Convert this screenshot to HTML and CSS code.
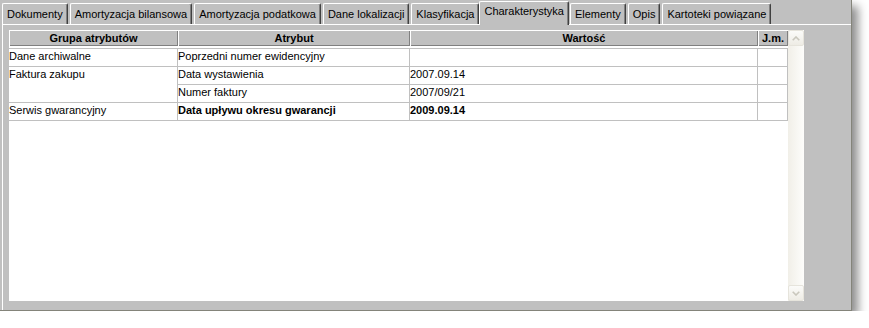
FILE: index.html
```html
<!DOCTYPE html>
<html lang="pl">
<head>
  <meta charset="UTF-8">
  <title>Charakterystyka</title>
  <link rel="stylesheet" href="styles.css">
</head>
<body>

  <div class="window">
    <div class="tabs">
      <div class="tab">Dokumenty</div>
      <div class="tab">Amortyzacja bilansowa</div>
      <div class="tab">Amortyzacja podatkowa</div>
      <div class="tab">Dane lokalizacji</div>
      <div class="tab">Klasyfikacja</div>
      <div class="tab active">Charakterystyka</div>
      <div class="tab">Elementy</div>
      <div class="tab">Opis</div>
      <div class="tab">Kartoteki powiązane</div>
    </div>

    <div class="panel">
      <div class="grid-wrap">
        <table class="grid">
          <thead>
            <tr>
              <th class="col-group">Grupa atrybutów</th>
              <th class="col-attr">Atrybut</th>
              <th class="col-value">Wartość</th>
              <th class="col-unit">J.m.</th>
            </tr>
          </thead>
          <tbody>
            <tr>
              <td>Dane archiwalne</td>
              <td>Poprzedni numer ewidencyjny</td>
              <td></td>
              <td></td>
            </tr>
            <tr>
              <td rowspan="2">Faktura zakupu</td>
              <td>Data wystawienia</td>
              <td>2007.09.14</td>
              <td></td>
            </tr>
            <tr>
              <td>Numer faktury</td>
              <td>2007/09/21</td>
              <td></td>
            </tr>
            <tr class="marked">
              <td class="plain">Serwis gwarancyjny</td>
              <td>Data upływu okresu gwarancji</td>
              <td>2009.09.14</td>
              <td></td>
            </tr>
          </tbody>
        </table>
      </div>

      <div class="scrollbar">
        <div class="scroll-btn">
          <svg width="8" height="5" viewBox="0 0 8 5"><path d="M0.7 4.3 L4 1 L7.3 4.3" fill="none" stroke="#c9c7bd" stroke-width="1.6"/></svg>
        </div>
        <div class="scroll-btn">
          <svg width="8" height="5" viewBox="0 0 8 5"><path d="M0.7 0.7 L4 4 L7.3 0.7" fill="none" stroke="#c9c7bd" stroke-width="1.6"/></svg>
        </div>
      </div>
    </div>
  </div>

</body>
</html>
```

FILE: styles.css
```css
body {
  margin: 0;
  padding: 0;
  background-color: white;
  font-family: "Liberation Sans", Arial, sans-serif;
  font-size: 11px;
  color: black;
}

.window {
  box-sizing: border-box;
  width: 852px;
  height: 311px;
  background-color: #c0c0c0;
  border-right: 1px solid #84847a;
  border-bottom: 1px solid #84847a;
  box-shadow: 6px 6px 9px rgba(0, 0, 0, 0.45);
}

/* zakladki */
.tabs {
  display: flex;
  align-items: flex-end;
  gap: 2px;
  height: 24px;
  padding-left: 2px;
}

.tab {
  box-sizing: border-box;
  height: 21px;
  padding: 0 4px;
  line-height: 20px;
  white-space: nowrap;
  border-top: 1px solid white;
  border-left: 1px solid white;
  border-right: 1px solid #404040;
  border-radius: 2px 2px 0 0;
  box-shadow: inset -1px 0 #808080;
}

.tab.active {
  position: relative;
  z-index: 1;
  height: 24px;
  line-height: 18px;
  margin: 0 -1px -1px -2px;
  background-color: #c0c0c0;
}

.panel {
  box-sizing: border-box;
  display: flex;
  height: 286px;
  margin-left: 2px;
  padding: 5px 0 0 6px;
  border-top: 1px solid white;
  border-left: 1px solid white;
}

/* tabela */
.grid-wrap {
  width: 779px;
  height: 271px;
  background-color: white;
}

.grid {
  width: 779px;
  table-layout: fixed;
  border-collapse: separate;
  border-spacing: 0;
}

.grid th {
  box-sizing: border-box;
  height: 18px;
  padding: 0;
  line-height: 16px;
  font-weight: bold;
  text-align: center;
  background-color: #c0c0c0;
  background-clip: padding-box;
  border-bottom: 2px solid white;
  box-shadow: inset 1px 1px white, inset -1px -1px #808080;
}

.col-group { width: 169px; }
.col-attr { width: 232px; }
.col-value { width: 348px; }
.col-unit { width: 30px; }

.grid td {
  padding: 0 0 2px 0;
  line-height: 15px;
  vertical-align: top;
  white-space: nowrap;
  overflow: hidden;
  border-right: 1px solid #c0c0c0;
  border-bottom: 1px solid #c0c0c0;
}

.grid tbody tr:first-child td {
  border-top: 1px solid #c0c0c0;
}

.grid tr.marked td {
  font-weight: bold;
}

.grid tr.marked td.plain {
  font-weight: normal;
}

/* pasek przewijania */
.scrollbar {
  display: flex;
  flex-direction: column;
  justify-content: space-between;
  width: 16px;
  height: 271px;
  background: linear-gradient(to right, #f1efe8, #fdfdfb);
}

.scroll-btn {
  box-sizing: border-box;
  display: flex;
  align-items: center;
  justify-content: center;
  width: 16px;
  height: 16px;
  border: 1px solid #e6e4dc;
  border-radius: 2px;
  background: linear-gradient(#fbfbf9, #eeece5);
}
```
